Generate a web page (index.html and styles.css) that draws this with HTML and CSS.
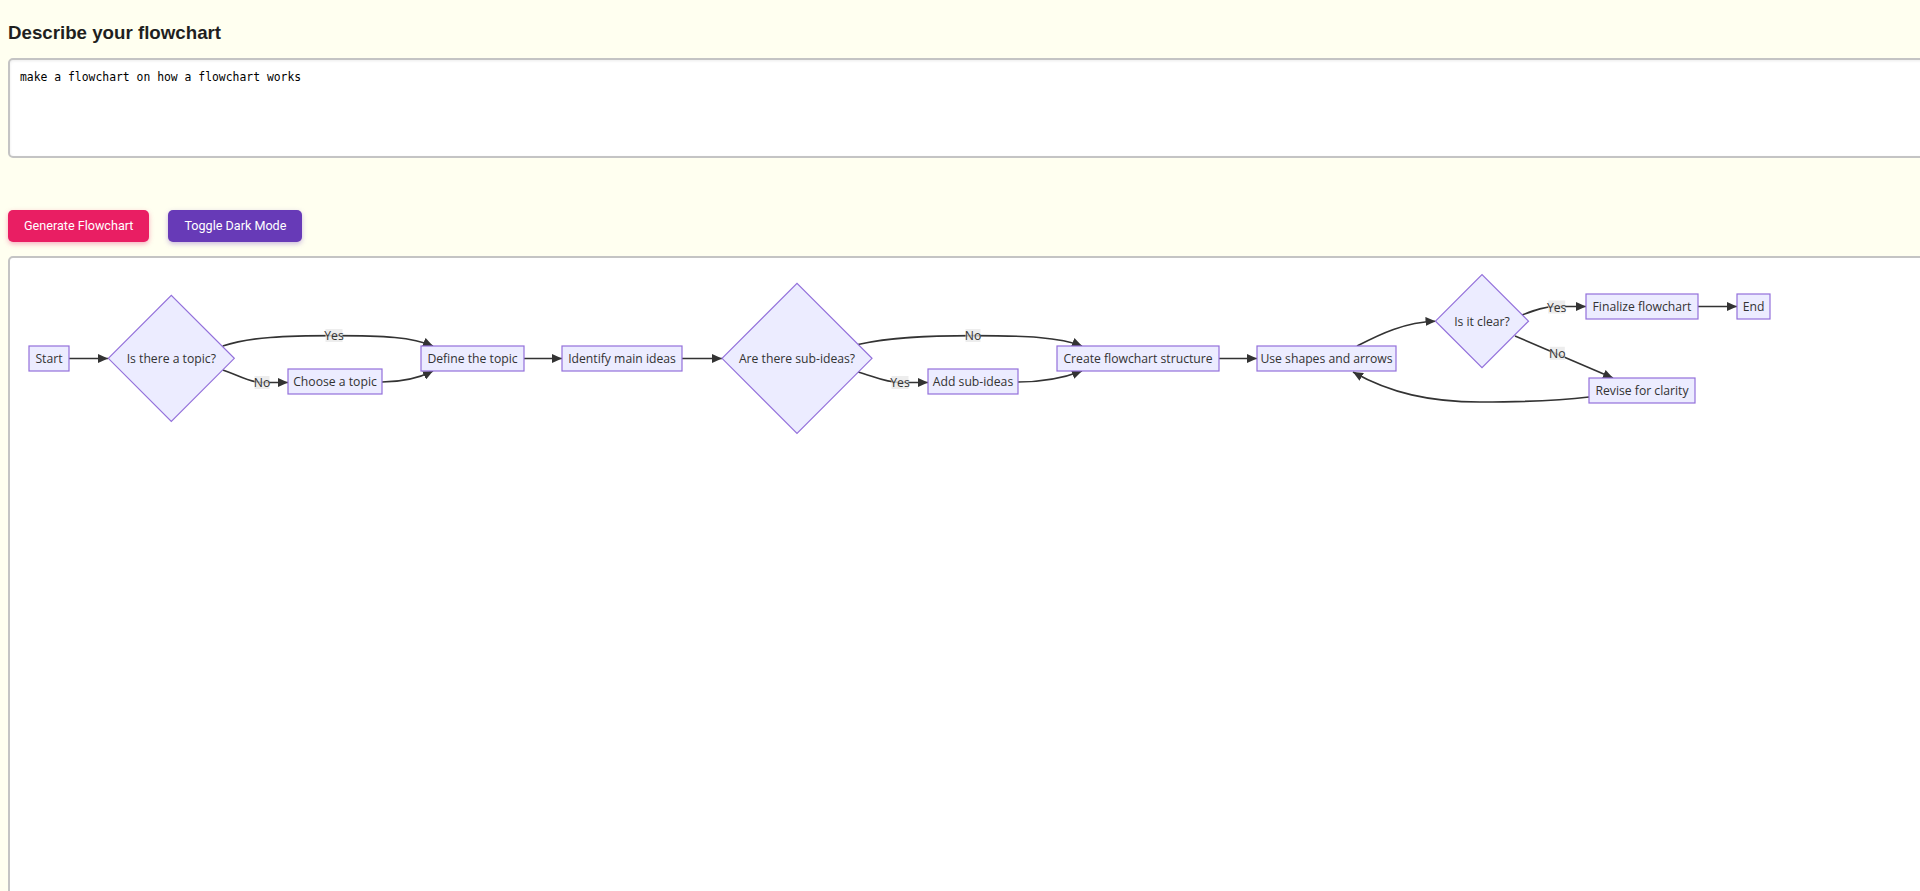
FILE: index.html
```html
<!DOCTYPE html>
<html lang="en">
<head>
<meta charset="utf-8">
<title>Flowchart Generator</title>
<link rel="stylesheet" href="styles.css">
</head>
<body>
<h3 class="title">Describe your flowchart</h3>
<textarea class="prompt">make a flowchart on how a flowchart works</textarea>
<div class="actions">
  <button class="btn btn-generate">Generate Flowchart</button>
  <button class="btn btn-dark">Toggle Dark Mode</button>
</div>
<div class="chart-box">
  <svg class="chart" width="1910" height="700" viewBox="10 258 1910 700" xmlns="http://www.w3.org/2000/svg">
    <defs>
      <marker id="arrow" markerUnits="userSpaceOnUse" markerWidth="10" markerHeight="9" refX="10" refY="4.5" orient="auto">
        <path d="M0,0 L10,4.5 L0,9 z" fill="#333"/>
      </marker>
    </defs>

    <g class="edges">
      <path d="M69,358.5 L108,358.5"/>
      <path d="M222.7,346 C250,337 285,335.6 334,335.6 C385,335.6 412,337 433,346"/>
      <path d="M222.7,370 C238,375 249,382.5 262,382.5 L288,382.5"/>
      <path d="M382,382 C405,382 420,377.5 433,371"/>
      <path d="M524,358.5 L562,358.5"/>
      <path d="M682,358.5 L722,358.5"/>
      <path d="M858,344.5 C890,337 928,335.6 973,335.6 C1025,335.6 1060,337 1082,346"/>
      <path d="M858,372 C873,376 885,382.5 900,382.5 L928,382.5"/>
      <path d="M1018,382 C1045,382 1065,377.5 1082,371"/>
      <path d="M1219,358.5 L1257,358.5"/>
      <path d="M1357,346 C1380,334 1405,322 1435.5,321.2"/>
      <path d="M1522,315 C1535,310 1545,306.5 1557,306.5 L1586,306.5"/>
      <path d="M1515,336 L1613,378"/>
      <path d="M1698,306.5 L1737,306.5"/>
      <path d="M1589,397 C1560,400.5 1520,402 1480,402 C1430,402 1390,393 1353,372"/>
    </g>

    <g class="labels">
      <rect x="325.5" y="329" width="17" height="13"/>
      <text x="334" y="335.6">Yes</text>
      <rect x="254.5" y="376" width="15" height="13"/>
      <text x="262" y="382.6">No</text>
      <rect x="965.5" y="329" width="15" height="13"/>
      <text x="973" y="335.6">No</text>
      <rect x="891.5" y="376" width="17" height="13"/>
      <text x="900" y="382.6">Yes</text>
      <rect x="1548.2" y="300.5" width="17" height="13"/>
      <text x="1556.7" y="307.1">Yes</text>
      <rect x="1549.8" y="346.8" width="15" height="13"/>
      <text x="1557.3" y="353.4">No</text>
    </g>

    <g class="nodes">
      <rect x="29" y="346" width="40" height="25"/>
      <text x="49" y="358.5">Start</text>

      <polygon points="108.3,358.3 171.3,295.3 234.3,358.3 171.3,421.3"/>
      <text x="171.3" y="358.5">Is there a topic?</text>

      <rect x="288" y="369" width="94" height="25"/>
      <text x="335" y="381.5">Choose a topic</text>

      <rect x="421" y="346" width="103" height="25"/>
      <text x="472.5" y="358.5">Define the topic</text>

      <rect x="562" y="346" width="120" height="25"/>
      <text x="622" y="358.5">Identify main ideas</text>

      <polygon points="722,358.3 797,283.3 872,358.3 797,433.3"/>
      <text x="797" y="358.5">Are there sub-ideas?</text>

      <rect x="928" y="369" width="90" height="25"/>
      <text x="973" y="381.5">Add sub-ideas</text>

      <rect x="1057" y="346" width="162" height="25"/>
      <text x="1138" y="358.5">Create flowchart structure</text>

      <rect x="1257" y="346" width="139" height="25"/>
      <text x="1326.5" y="358.5">Use shapes and arrows</text>

      <polygon points="1435.5,321.2 1482,274.7 1528.5,321.2 1482,367.7"/>
      <text x="1482" y="321.2">Is it clear?</text>

      <rect x="1586" y="294" width="112" height="25"/>
      <text x="1642" y="306.5">Finalize flowchart</text>

      <rect x="1737" y="294" width="33" height="25"/>
      <text x="1753.5" y="306.5">End</text>

      <rect x="1589" y="378" width="106" height="25"/>
      <text x="1642" y="390.5">Revise for clarity</text>
    </g>
  </svg>
</div>
</body>
</html>
```
FILE: styles.css
```css
html, body {
  overflow: hidden;
}

body {
  margin: 0;
  padding: 0 8px;
  background: #fffff0;
  font-family: "Liberation Sans", Arial, sans-serif;
}

.title {
  margin: 22px 0 14px;
  font-size: 18.72px;
  line-height: 22px;
  font-weight: bold;
  color: #1f1f1f;
}

.prompt {
  display: block;
  box-sizing: content-box;
  width: 100%;
  height: 76px;
  margin: 0;
  padding: 10px;
  border: 2px solid #c4c4c4;
  border-radius: 5px;
  background: #fff;
  box-shadow: inset 0 1px 3px rgba(0, 0, 0, 0.08);
  font-family: "DejaVu Sans Mono", "Liberation Mono", monospace;
  font-size: 11.4px;
  line-height: 15px;
  color: #000;
  resize: vertical;
  outline: none;
}

.actions {
  display: flex;
  gap: 19px;
  margin-top: 52px;
  margin-bottom: 14px;
}

.btn {
  height: 32px;
  padding: 0 16px;
  border: none;
  border-radius: 5px;
  font-family: Roboto, "Liberation Sans", sans-serif;
  font-size: 12.6px;
  line-height: 32px;
  color: #fff;
  cursor: pointer;
}

.btn-generate {
  background: #e91e63;
  box-shadow: 0 2px 5px rgba(233, 30, 99, 0.35);
}

.btn-dark {
  background: #673ab7;
  box-shadow: 0 2px 5px rgba(103, 58, 183, 0.35);
}

.chart-box {
  box-sizing: content-box;
  width: 100%;
  min-height: 700px;
  padding: 0 12px 0 0;
  border: 2px solid #c4c4c4;
  border-radius: 5px;
  background: #fff;
}

.chart {
  display: block;
}

.edges path {
  fill: none;
  stroke: #333;
  stroke-width: 1.6;
  marker-end: url(#arrow);
}

.labels rect {
  fill: rgba(232, 232, 232, 0.8);
}

.labels text,
.nodes text {
  font-family: "Open Sans", "Noto Sans", sans-serif;
  font-size: 12.2px;
  fill: #333;
  text-anchor: middle;
  dominant-baseline: central;
}

.nodes rect,
.nodes polygon {
  fill: #ececff;
  stroke: #9370db;
  stroke-width: 1.2;
}
```
